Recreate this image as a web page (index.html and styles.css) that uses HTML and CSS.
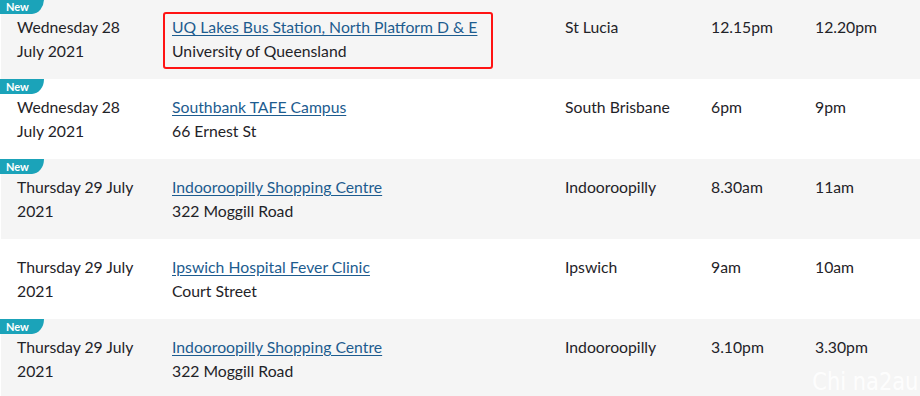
FILE: index.html
```html
<!DOCTYPE html>
<html lang="en">
<head>
<meta charset="utf-8">
<link rel="stylesheet" href="styles.css">
</head>
<body>
<div class="wrap">
<table class="sites">
  <colgroup>
    <col class="c-date"><col class="c-loc"><col class="c-sub"><col class="c-start"><col class="c-end">
  </colgroup>
  <tbody>
    <tr class="shade first">
      <td class="date"><span class="badge">New</span>Wednesday 28 July 2021</td>
      <td class="loc"><a href="#">UQ Lakes Bus Station, North Platform D &amp; E</a><br>University of Queensland<span class="highlight"></span></td>
      <td>St Lucia</td>
      <td>12.15pm</td>
      <td>12.20pm</td>
    </tr>
    <tr>
      <td class="date"><span class="badge">New</span>Wednesday 28 July 2021</td>
      <td class="loc"><a href="#">Southbank TAFE Campus</a><br>66 Ernest St</td>
      <td>South Brisbane</td>
      <td>6pm</td>
      <td>9pm</td>
    </tr>
    <tr class="shade">
      <td class="date"><span class="badge">New</span>Thursday 29 July 2021</td>
      <td class="loc"><a href="#">Indooroopilly Shopping Centre</a><br>322 Moggill Road</td>
      <td>Indooroopilly</td>
      <td>8.30am</td>
      <td>11am</td>
    </tr>
    <tr>
      <td class="date">Thursday 29 July 2021</td>
      <td class="loc"><a href="#">Ipswich Hospital Fever Clinic</a><br>Court Street</td>
      <td>Ipswich</td>
      <td>9am</td>
      <td>10am</td>
    </tr>
    <tr class="shade">
      <td class="date"><span class="badge">New</span>Thursday 29 July 2021</td>
      <td class="loc"><a href="#">Indooroopilly Shopping Centre</a><br>322 Moggill Road</td>
      <td>Indooroopilly</td>
      <td>3.10pm</td>
      <td>3.30pm</td>
    </tr>
  </tbody>
</table>
<span class="watermark">Chi na2au</span>
</div>
</body>
</html>
```
FILE: styles.css
```css
html, body {
  margin: 0;
  padding: 0;
  background: #ffffff;
}
body {
  font-family: Lato, "Open Sans", sans-serif;
  font-size: 15.75px;
  line-height: 24px;
  color: #1f2328;
  overflow: hidden;
}
.wrap {
  position: relative;
  width: 920px;
  height: 396px;
  overflow: hidden;
  padding-left: 1px;
  box-sizing: border-box;
}
.sites {
  border-collapse: collapse;
  table-layout: fixed;
  width: 919px;
  margin-top: -1px;
}
.c-date { width: 155px; }
.c-loc { width: 393px; }
.c-sub { width: 146px; }
.c-start { width: 104px; }
.c-end { width: 121px; }
.sites td {
  height: 48px;
  padding: 16px 16px 16px 16px;
  vertical-align: top;
  position: relative;
}
.sites tr.shade td {
  background: #f5f5f5;
}
.sites a {
  color: #1d5c8f;
  text-decoration: underline;
  text-underline-offset: 2px;
}
.badge {
  position: absolute;
  left: -1px;
  top: 0;
  width: 44px;
  height: 15px;
  box-sizing: border-box;
  padding-left: 6px;
  background: #1ba3b9;
  color: #ffffff;
  font-size: 11px;
  font-weight: 700;
  line-height: 15px;
  border-bottom-right-radius: 12px 15px;
}
.highlight {
  position: absolute;
  left: 7px;
  top: 13px;
  width: 330px;
  height: 57px;
  box-sizing: border-box;
  border: 2px solid #ff1414;
  border-radius: 3px;
}
.watermark {
  position: absolute;
  right: 2px;
  bottom: 0;
  font-family: "DejaVu Sans", sans-serif;
  font-size: 25px;
  line-height: 29px;
  color: rgba(255, 255, 255, 0.9);
  transform: scaleX(0.84);
  transform-origin: right bottom;
}
```
